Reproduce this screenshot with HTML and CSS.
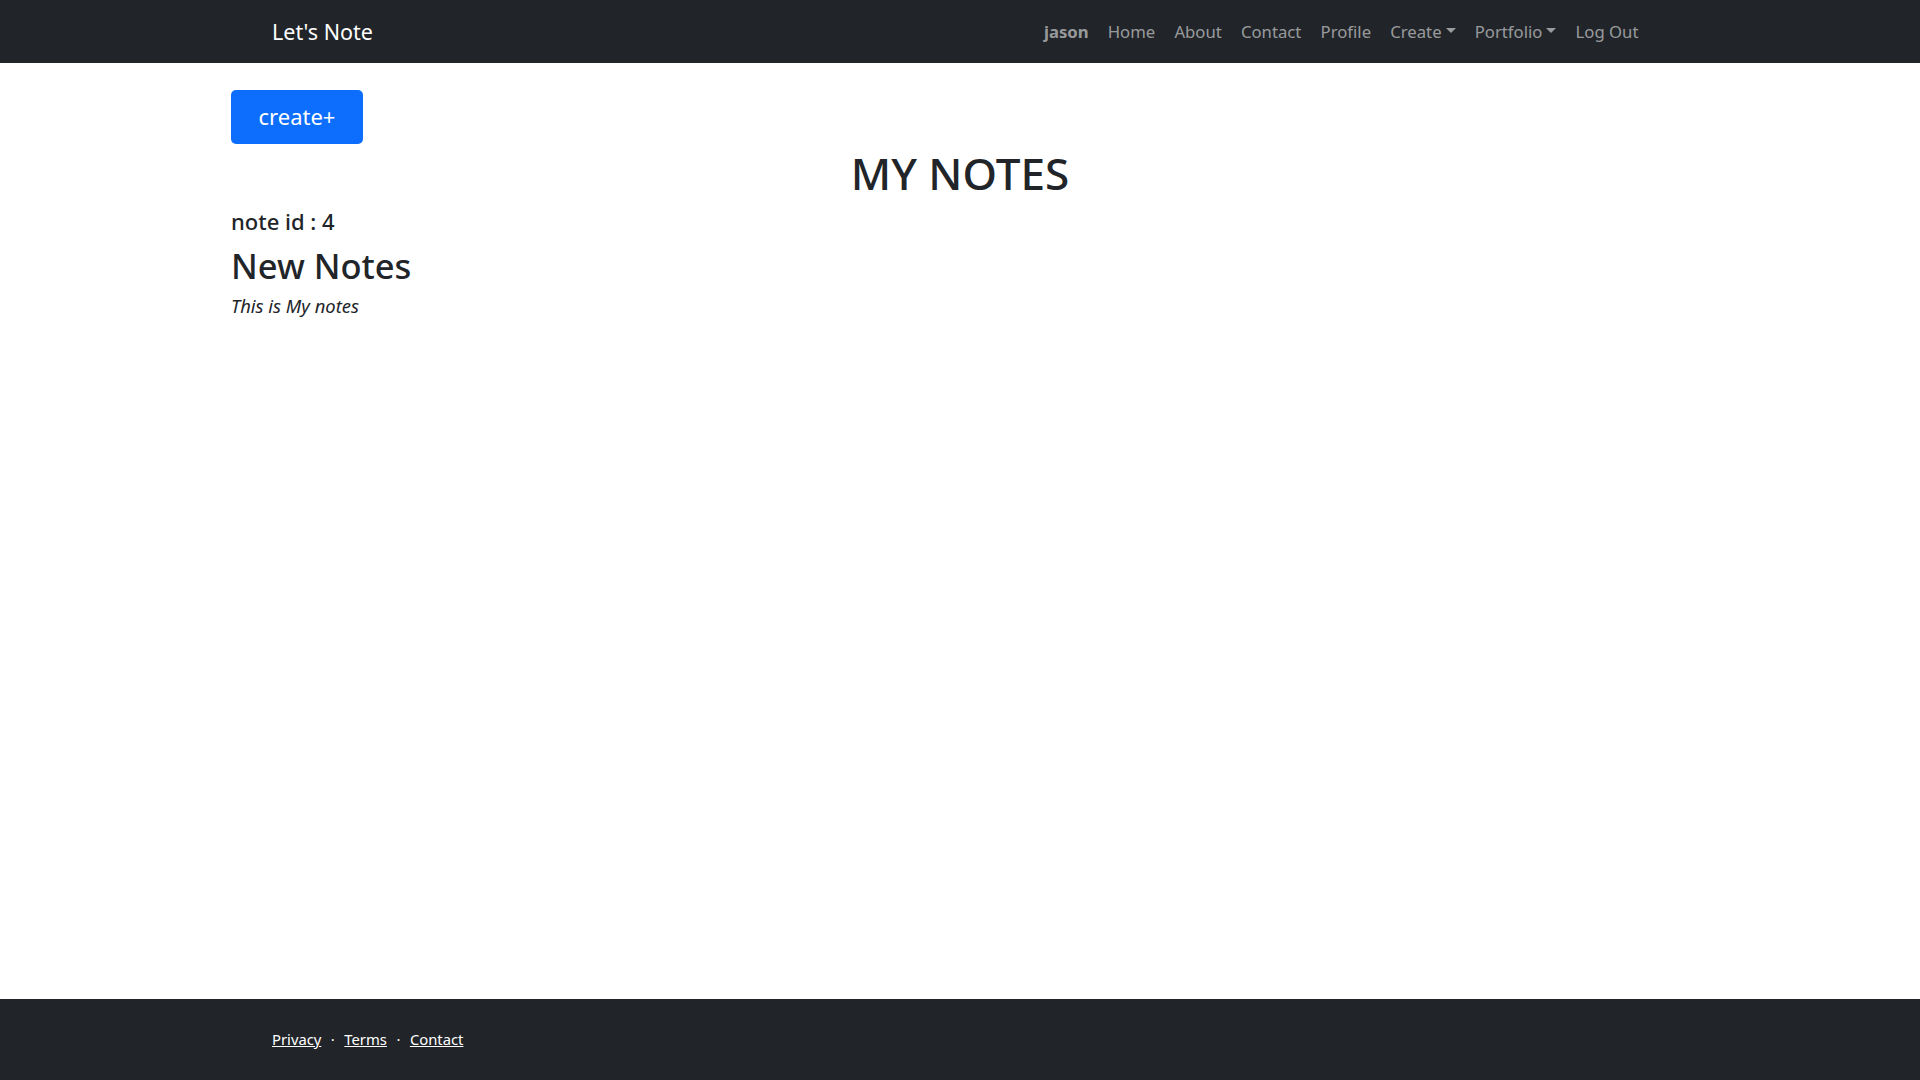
FILE: index.html
```html
<!DOCTYPE html>
<html lang="en">
<head>
<meta charset="utf-8">
<title>Let's Note</title>
<link rel="stylesheet" href="styles.css">
</head>
<body>
<div class="page">
  <header class="navbar">
    <div class="nav-container">
      <a class="brand" href="#">Let's Note</a>
      <ul class="nav">
        <li><a class="nav-link user" href="#">jason</a></li>
        <li><a class="nav-link" href="#">Home</a></li>
        <li><a class="nav-link" href="#">About</a></li>
        <li><a class="nav-link" href="#">Contact</a></li>
        <li><a class="nav-link" href="#">Profile</a></li>
        <li><a class="nav-link dropdown" href="#">Create<span class="caret"></span></a></li>
        <li><a class="nav-link dropdown" href="#">Portfolio<span class="caret"></span></a></li>
        <li><a class="nav-link" href="#">Log Out</a></li>
      </ul>
    </div>
  </header>

  <main class="main">
    <div class="container">
      <a class="btn-create" href="#">create+</a>
      <h1 class="title">MY NOTES</h1>
      <div class="note">
        <h5 class="note-id">note id : 4</h5>
        <h2 class="note-title">New Notes</h2>
        <p class="note-body">This is My notes</p>
      </div>
    </div>
  </main>

  <footer class="footer">
    <div class="footer-container">
      <a href="#" class="footer-link">Privacy</a>
      <span class="dot">·</span>
      <a href="#" class="footer-link">Terms</a>
      <span class="dot">·</span>
      <a href="#" class="footer-link">Contact</a>
    </div>
  </footer>
</div>
</body>
</html>
```

FILE: styles.css
```css
* { box-sizing: border-box; }

html, body {
  margin: 0;
  padding: 0;
}

body {
  font-family: "Noto Sans", "Open Sans", "DejaVu Sans", sans-serif;
  color: #212529;
  background: #fff;
}

.page {
  min-height: 100vh;
  display: flex;
  flex-direction: column;
}

/* navbar */
.navbar {
  background: #212529;
  height: 63px;
  display: flex;
  align-items: center;
}

.nav-container {
  width: 1376px;
  margin: 0 auto;
  display: flex;
  justify-content: space-between;
  align-items: center;
}

.brand {
  color: #fff;
  text-decoration: none;
  font-size: 21.5px;
  line-height: 36px;
  margin-top: 0;
}

.nav {
  list-style: none;
  margin: 0;
  padding: 0;
  display: flex;
  align-items: center;
}

.nav-link {
  display: flex;
  align-items: center;
  padding: 0 9.6px;
  color: rgba(255, 255, 255, 0.55);
  text-decoration: none;
  font-size: 16.7px;
  line-height: 28px;
  margin-top: 0;
}

.nav-link.user {
  font-weight: 700;
}

.caret {
  display: inline-block;
  margin-left: 4px;
  width: 0;
  height: 0;
  border-top: 5.5px solid currentColor;
  border-left: 5.5px solid transparent;
  border-right: 5.5px solid transparent;
  margin-top: -3px;
}

/* main */
.main {
  flex: 1;
}

.container {
  width: 1458px;
  margin: 0 auto;
}

.btn-create {
  display: inline-flex;
  align-items: center;
  justify-content: center;
  margin-top: 27px;
  width: 132px;
  height: 54px;
  background: #0d6efd;
  color: #fff;
  border-radius: 5px;
  text-decoration: none;
  font-size: 22px;
  line-height: 1;
  padding-bottom: 2px;
}

.title {
  text-align: center;
  font-size: 44px;
  font-weight: 500;
  line-height: 1.2;
  margin: 3px 0 0;
}

.note {
  margin-top: 8px;
}

.note-id {
  font-size: 22px;
  font-weight: 500;
  line-height: 1.2;
  margin: 0 0 11px;
}

.note-title {
  font-size: 34.5px;
  font-weight: 500;
  line-height: 1.2;
  margin: 0 0 6px;
}

.note-body {
  font-size: 18.4px;
  font-style: italic;
  margin: 0;
}

/* footer */
.footer {
  background: #212529;
  height: 81px;
  display: flex;
  align-items: center;
}

.footer-container {
  width: 1376px;
  margin: 0 auto;
  display: flex;
  align-items: center;
  font-size: 14.8px;
  color: #fff;
  padding-bottom: 1px;
}

.footer-link {
  color: #fff;
  text-decoration: underline;
}

.dot {
  margin: 0 9.5px;
}
```
